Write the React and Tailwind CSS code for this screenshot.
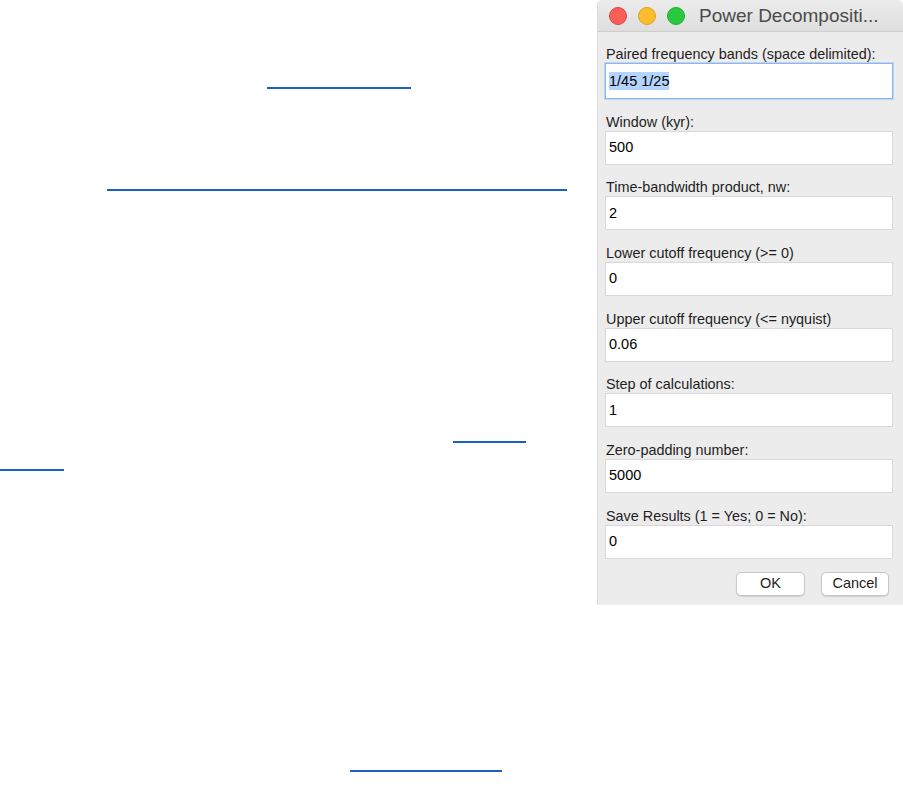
import React from "react";

const fields = [
  { label: "Window (kyr):", value: "500" },
  { label: "Time-bandwidth product, nw:", value: "2" },
  { label: "Lower cutoff frequency (>= 0)", value: "0" },
  { label: "Upper cutoff frequency (<= nyquist)", value: "0.06" },
  { label: "Step of calculations:", value: "1" },
  { label: "Zero-padding number:", value: "5000" },
  { label: "Save Results (1 = Yes; 0 = No):", value: "0" },
];

function Field({ label, value }) {
  return (
    <div className="flex flex-col mt-[14.7px]">
      <div className="h-[16px] leading-[16px] pl-[1px] text-[14.4px] text-[#1e1e1e] whitespace-nowrap">{label}</div>
      <div className="mt-[1px] h-[34px] w-[288px] bg-white border border-[#d9d9d9] flex items-center pl-[3px] text-[14.5px] text-black">
        {value}
      </div>
    </div>
  );
}

export default function App() {
  return (
    <div className="w-[903px] h-[798px] bg-white flex font-['Liberation_Sans',Arial,sans-serif] overflow-hidden">
      <div className="w-[597px] flex flex-col">
        <div className="mt-[87px] ml-[267px] w-[144px] h-[1.5px] bg-[#1b5fbf]" />
        <div className="mt-[100.5px] ml-[107px] w-[460px] h-[1.5px] bg-[#1b5fbf]" />
        <div className="mt-[250.5px] ml-[453px] w-[73px] h-[1.5px] bg-[#1b5fbf]" />
        <div className="mt-[26.5px] ml-0 w-[64px] h-[1.5px] bg-[#1b5fbf]" />
        <div className="mt-[299.5px] ml-[350px] w-[152px] h-[1.5px] bg-[#1b5fbf]" />
      </div>
      <div className="w-[306px] h-[605px] bg-[#ececec] rounded-t-[5px] border-l border-[#dcdcdc] flex flex-col">
        <div className="h-[32px] shrink-0 rounded-t-[5px] bg-gradient-to-b from-[#ececec] to-[#dedede] border-b border-[#cdcdcd] flex items-center pl-[11px]">
          <div className="w-[18px] h-[18px] rounded-full bg-[#fc5f57] border border-[#e0443e]" />
          <div className="w-[18px] h-[18px] rounded-full bg-[#fdbc2e] border border-[#dea123] ml-[11px]" />
          <div className="w-[18px] h-[18px] rounded-full bg-[#2ac840] border border-[#1dad2b] ml-[11px]" />
          <div className="ml-[14px] text-[19px] text-[#4b4b4b] whitespace-nowrap leading-none">Power Decompositi...</div>
        </div>
        <div className="flex flex-col pl-[7px]">
          <div className="flex flex-col mt-[14px]">
            <div className="h-[16px] leading-[16px] pl-[1px] text-[14.4px] text-[#1e1e1e] whitespace-nowrap">Paired frequency bands (space delimited):</div>
            <div className="mt-[1px] h-[36px] w-[288px] bg-white border border-[#8db6ea] shadow-[0_0_0_1px_#bcd5f4] flex items-center pl-[3px] text-[14.5px] text-black">
              <span className="bg-[#b3d4fc] leading-[18px]">1/45 1/25</span>
            </div>
          </div>
          {fields.map((f) => (
            <Field key={f.label} label={f.label} value={f.value} />
          ))}
          <div className="flex justify-end w-[288px] pr-[4px] mt-[12.8px] gap-[16px]">
            <button className="w-[69px] h-[24px] bg-white border border-[#c8c8c8] rounded-[5px] shadow-[0_1px_1px_rgba(0,0,0,0.12)] text-[14.5px] text-[#1e1e1e] flex items-center justify-center">
              OK
            </button>
            <button className="w-[68px] h-[24px] bg-white border border-[#c8c8c8] rounded-[5px] shadow-[0_1px_1px_rgba(0,0,0,0.12)] text-[14.5px] text-[#1e1e1e] flex items-center justify-center">
              Cancel
            </button>
          </div>
        </div>
      </div>
    </div>
  );
}
